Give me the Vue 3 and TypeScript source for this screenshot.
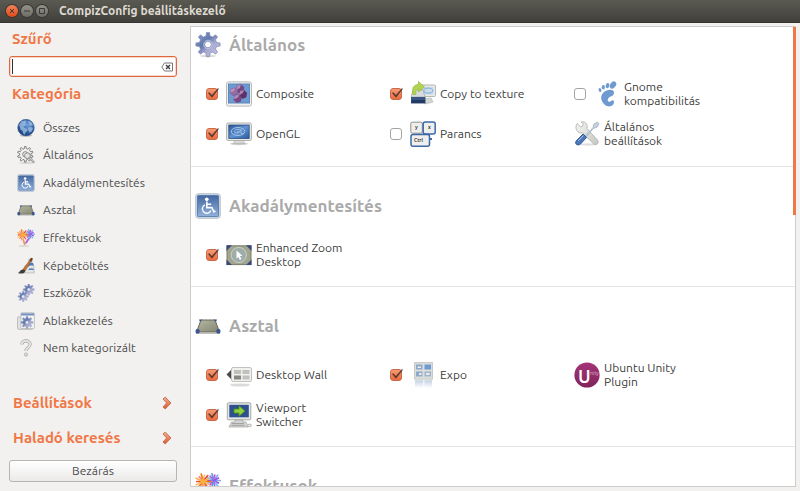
<script setup lang="ts">
import { ref } from 'vue'

interface Category { label: string; icon: string }
interface Plugin { label: string; icon: string; checked?: boolean }
interface Section { title: string; icon: string; plugins: Plugin[] }
interface IconText { x: number; y: number; text: string; kind: string }

const filter = ref('')

const categories: Category[] = [
  { label: 'Összes', icon: 'globe' },
  { label: 'Általános', icon: 'outline-gear' },
  { label: 'Akadálymentesítés', icon: 'access' },
  { label: 'Asztal', icon: 'desk' },
  { label: 'Effektusok', icon: 'burst' },
  { label: 'Képbetöltés', icon: 'image-load' },
  { label: 'Eszközök', icon: 'gears' },
  { label: 'Ablakkezelés', icon: 'window' },
  { label: 'Nem kategorizált', icon: 'question' },
]

const sections = ref<Section[]>([
  {
    title: 'Általános',
    icon: 'gear',
    plugins: [
      { label: 'Composite', icon: 'composite', checked: true },
      { label: 'Copy to texture', icon: 'copy', checked: true },
      { label: 'Gnome\nkompatibilitás', icon: 'foot', checked: false },
      { label: 'OpenGL', icon: 'opengl', checked: true },
      { label: 'Parancs', icon: 'keys', checked: false },
      { label: 'Általános\nbeállítások', icon: 'tools' },
    ],
  },
  {
    title: 'Akadálymentesítés',
    icon: 'access',
    plugins: [{ label: 'Enhanced Zoom\nDesktop', icon: 'zoom', checked: true }],
  },
  {
    title: 'Asztal',
    icon: 'desk',
    plugins: [
      { label: 'Desktop Wall', icon: 'wall', checked: true },
      { label: 'Expo', icon: 'expo', checked: true },
      { label: 'Ubuntu Unity\nPlugin', icon: 'unity' },
      { label: 'Viewport\nSwitcher', icon: 'viewport', checked: true },
    ],
  },
  { title: 'Effektusok', icon: 'burst', plugins: [] },
])

// Lettering that lies on top of an icon, in the icon's 26-unit box.
const iconTexts: Record<string, IconText[]> = {
  keys: [
    { x: 5, y: 8, text: 'y', kind: 'key-text' },
    { x: 18, y: 8, text: 'x', kind: 'key-text' },
    { x: 4, y: 21, text: 'Ctrl', kind: 'key-text' },
  ],
  unity: [
    { x: 4, y: 21, text: 'U', kind: 'unity-large' },
    { x: 16, y: 13, text: 'nity', kind: 'unity-small' },
  ],
}

// Closed outline of a cog with a round hole, drawn with the even-odd rule.
function gearPath(cx: number, cy: number, outer: number, inner: number, hole: number, teeth = 8): string {
  const step = (Math.PI * 2) / teeth
  const at = (r: number, a: number) => `${(cx + r * Math.sin(a)).toFixed(2)} ${(cy - r * Math.cos(a)).toFixed(2)}`
  const points: string[] = []
  for (let i = 0; i < teeth; i++) {
    const a = i * step
    points.push(at(inner, a - step * 0.29), at(outer, a - step * 0.16), at(outer, a + step * 0.16), at(inner, a + step * 0.29))
  }
  return `M${points.join('L')}ZM${cx - hole} ${cy}a${hole} ${hole} 0 1 0 ${hole * 2} 0a${hole} ${hole} 0 1 0 ${-hole * 2} 0Z`
}

interface Ray { d: string; color: string }
function rays(cx: number, cy: number, radius: number, colors: string[], count: number): Ray[] {
  return Array.from({ length: count }, (_, i) => {
    const a = (i * Math.PI * 2) / count
    const r = radius * (i % 2 ? 0.82 : 1)
    const x = (cx + r * Math.cos(a)).toFixed(2)
    const y = (cy + r * Math.sin(a)).toFixed(2)
    return { d: `M${cx} ${cy}L${x} ${y}`, color: colors[i % colors.length] }
  })
}
const coolRays = rays(18.5, 7.5, 6.8, ['#7fa8ee', '#9a4be6', '#6fc3f2', '#b565ec', '#4fa0dc', '#d04ad8'], 14)
const warmRays = rays(8, 8.5, 7.6, ['#f57900', '#fbc06a', '#ef4b3a', '#fbb04c', '#f58aa0'], 14)
</script>

<template>
  <div class="window">
    <svg class="sprite" aria-hidden="true">
      <defs>
        <linearGradient id="g-gear" x1="0" y1="0" x2="1" y2="1">
          <stop offset="0" stop-color="#8fa3cf" /><stop offset=".4" stop-color="#6178ad" /><stop offset=".6" stop-color="#a9a9d2" /><stop offset="1" stop-color="#c9c7e6" />
        </linearGradient>
        <linearGradient id="g-blue" x1="0" y1="0" x2="0" y2="1">
          <stop offset="0" stop-color="#4467a0" /><stop offset="1" stop-color="#91b2dc" />
        </linearGradient>
        <linearGradient id="g-screen" x1="0" y1="0" x2="1" y2="1">
          <stop offset="0" stop-color="#2d5596" /><stop offset=".5" stop-color="#5f92cf" /><stop offset="1" stop-color="#2c5aa2" />
        </linearGradient>
        <radialGradient id="g-globe" cx=".6" cy=".35" r=".7">
          <stop offset="0" stop-color="#6f9fdd" /><stop offset=".55" stop-color="#3465a4" /><stop offset="1" stop-color="#173a70" />
        </radialGradient>
        <linearGradient id="g-desk" x1="0" y1="0" x2="1" y2="1">
          <stop offset="0" stop-color="#b6b8a4" /><stop offset="1" stop-color="#83866f" />
        </linearGradient>
        <linearGradient id="g-metal" x1="0" y1="0" x2="1" y2="1">
          <stop offset="0" stop-color="#f6f6f4" /><stop offset="1" stop-color="#c4c6c1" />
        </linearGradient>
        <linearGradient id="g-fade" x1="0" y1="0" x2="0" y2="1">
          <stop offset="0" stop-color="#a9bdd4" /><stop offset="1" stop-color="#ffffff" />
        </linearGradient>
        <linearGradient id="g-unity" x1="0" y1="0" x2="0" y2="1">
          <stop offset="0" stop-color="#a43478" /><stop offset="1" stop-color="#80245a" />
        </linearGradient>
        <linearGradient id="g-arrow" x1="0" y1="0" x2="0" y2="1">
          <stop offset="0" stop-color="#f0b08c" /><stop offset="1" stop-color="#e0582c" />
        </linearGradient>
      </defs>

      <symbol id="i-gear" viewBox="0 0 26 26">
        <ellipse cx="13" cy="24" rx="8" ry="1.5" fill="#000" opacity=".14" />
        <path :d="gearPath(13, 12.5, 12.2, 8.8, 3.3)" fill="url(#g-gear)" fill-rule="evenodd" stroke="#8791b8" stroke-width=".8" stroke-linejoin="round" />
        <circle cx="13" cy="12.5" r="4.3" fill="none" stroke="#bdc4df" stroke-width="1" />
      </symbol>
      <symbol id="i-outline-gear" viewBox="0 0 26 26">
        <ellipse cx="14" cy="24.5" rx="11" ry="1" fill="#000" opacity=".15" />
        <path :d="gearPath(12, 12, 11.3, 8.2, 3.8, 10)" fill="#f0f0ee" fill-rule="evenodd" stroke="#7d7f7b" stroke-width="1.4" stroke-linejoin="round" />
        <circle cx="15" cy="14" r="4.2" fill="#e2e3e0" stroke="#8a8b87" stroke-width="1.4" />
        <path d="M18 17l6 6" stroke="#8a8b87" stroke-width="3" stroke-linecap="round" />
        <path d="M18 17l6 6" stroke="#f2f2f0" stroke-width="1.2" stroke-linecap="round" />
      </symbol>
      <symbol id="i-globe" viewBox="0 0 26 26">
        <ellipse cx="13" cy="24" rx="9" ry="1.6" fill="#000" opacity=".2" />
        <circle cx="13" cy="12.5" r="12" fill="url(#g-globe)" stroke="#2b548f" stroke-width=".7" />
        <path d="M3 8l4-5 5-1 2 2-2 2 2 1-3 3-2 1 2 2 3 1 1 3-3 3-1 3-2-2-1-4-3-2-1-3zM16 3l4 1 3 4-3 2-3-2 1-2-2-1zM17 12l5 0 1 2-2 4-3 2-1-3-2-2z" fill="#a9c6ea" opacity=".7" />
      </symbol>
      <symbol id="i-access" viewBox="0 0 26 26">
        <rect x=".8" y=".8" width="24.4" height="24.4" rx="2.5" fill="#e7edf5" stroke="#aeb8c6" stroke-width="1" />
        <rect x="2.4" y="2.4" width="21.2" height="21.2" rx="1" fill="url(#g-blue)" stroke="#44689e" stroke-width=".8" />
        <g transform="translate(2.400 2.200) scale(.83)">
          <circle cx="11.3" cy="5" r="2.2" fill="#fff" />
          <path d="M11.4 7.500v7.500h6l2.5 5 1.800-1M11.6 11h5" fill="none" stroke="#fff" stroke-width="1.900" />
          <path d="M9.200 11.6a5.300 5.300 0 1 0 7 6.800" fill="none" stroke="#fff" stroke-width="1.700" />
        </g>
      </symbol>
      <symbol id="i-desk" viewBox="0 0 26 26">
        <path d="M1 20h24v1H1z" fill="#000" opacity=".25" />
        <path d="M6 7h14l4.5 12H1.500z" fill="url(#g-desk)" stroke="#64685a" stroke-width="1" />
        <path d="M4 6.500h3.500L5 9zM22 6.500h-3.500L21 9z" fill="#3e5690" />
        <rect x=".6" y="16" width="4" height="4.500" rx="1.500" fill="#3b5590" />
        <rect x="21.400" y="16" width="4" height="4.500" rx="1.500" fill="#3b5590" />
      </symbol>
      <symbol id="i-burst" viewBox="0 0 26 26">
        <ellipse cx="10" cy="24.500" rx="8" ry="1.200" fill="#000" opacity=".13" />
        <path d="M9 15l2 7" stroke="#ef9a4a" stroke-width="2.500" stroke-linecap="round" />
        <path d="M17 14l-4 6" stroke="#a95ae6" stroke-width="2.500" stroke-linecap="round" />
        <g stroke-linecap="round" stroke-width="1.700">
          <path v-for="(ray, i) in coolRays" :key="'c' + i" :d="ray.d" :stroke="ray.color" />
          <path v-for="(ray, i) in warmRays" :key="'w' + i" :d="ray.d" :stroke="ray.color" />
        </g>
        <circle cx="8" cy="8.500" r="2.500" fill="#fbb03b" />
      </symbol>
      <symbol id="i-image-load" viewBox="0 0 26 26">
        <path d="M9 21l2-8 9-5 4 3 1 12H9z" fill="#e6e7e5" stroke="#a3a5a2" stroke-width=".8" />
        <path d="M16 2.500l6-1 1 8-7 2z" fill="#cfd6df" />
        <path d="M15.500 9.500c3-2 6-2 8-.5l.5 4c-3-1-5-1-8 1zM17 17c2-1 5-1 7 0v2c-2-1-5-1-7 0z" fill="#4a7dc0" />
        <path d="M8 19L20 2l2 1.500L12 20z" fill="#c77430" stroke="#82502a" stroke-width=".7" />
        <path d="M18 5l2.500-4L23 2l-2 5z" fill="#6a4528" />
        <path d="M1 23c3 0 3-5 8-5 2 0 4 2 2 4-2 3-7 2-10 1z" fill="#3c3d3c" />
      </symbol>
      <symbol id="i-gears" viewBox="0 0 26 26">
        <path :d="gearPath(17, 8, 8, 5.6, 2.2)" fill="url(#g-gear)" fill-rule="evenodd" stroke="#8b98bf" stroke-width=".7" />
        <path :d="gearPath(9, 18, 7.6, 5.2, 2.2)" fill="url(#g-gear)" fill-rule="evenodd" stroke="#9aa5c8" stroke-width=".7" />
      </symbol>
      <symbol id="i-window" viewBox="0 0 26 26">
        <rect x=".8" y="7" width="22" height="18" rx="1.500" fill="#e3e4e2" stroke="#a9aba8" />
        <rect x="5.500" y="1" width="19.700" height="23" rx="1.500" fill="#f3f3f2" stroke="#b0b2af" />
        <path d="M6 2h18.700v3H6z" fill="#6f8fc2" />
        <path :d="gearPath(14.5, 15, 8.6, 6, 2.3)" fill="url(#g-gear)" fill-rule="evenodd" stroke="#8390b8" stroke-width=".8" />
      </symbol>
      <symbol id="i-question" viewBox="0 0 26 26">
        <path d="M7 8c0-7 12-7 12-.5 0 4.500-6 5-6 10" fill="none" stroke="#a2a4a0" stroke-width="4.500" />
        <path d="M7 8c0-7 12-7 12-.5 0 4.500-6 5-6 10" fill="none" stroke="#e7e8e6" stroke-width="2.600" />
        <circle cx="13" cy="22.500" r="2.400" fill="#dcdddb" stroke="#a2a4a0" />
      </symbol>
      <symbol id="i-composite" viewBox="0 0 26 26">
        <rect x=".5" y=".9" width="25" height="24.200" rx="2" fill="#f0f0ee" stroke="#b8bab5" />
        <rect x="2.500" y="3" width="21" height="19" fill="#6d9bd1" stroke="#5b86bd" />
        <g stroke="#6d3f78" stroke-width=".5">
          <path d="M11 4.500l4-1 3 3-1 4.500-4 1-3-3z" fill="#76447f" /><path d="M5 8l4-1 3 2.500-1 4-4 1-3-3z" fill="#9a6ba3" />
          <path d="M14 10l4-1 3 3-1 4.500-4 1-3-3z" fill="#5c2f68" /><path d="M9 14.500l4-1 2.500 3-1 4-4 1-3-3z" fill="#7a4685" />
        </g>
        <path d="M11 4.500l4-1-1 3.500-4 2zM5 8l4-1-1 3-4 1.500zM14 10l4-1-1 3-4 2.500zM9 14.500l4-1-1 3-4.500 2z" fill="#c7a2cb" opacity=".75" />
      </symbol>
      <symbol id="i-copy" viewBox="0 0 26 26">
        <rect x="11" y="4" width="14.500" height="11.500" rx="1" fill="#e8e9e7" stroke="#b4b7b2" />
        <rect x="13" y="6" width="10.500" height="7.500" fill="#c9dcee" />
        <ellipse cx="18.300" cy="9.600" rx="4.500" ry="2.500" fill="none" stroke="#7aa5d2" stroke-width=".9" />
        <path d="M3 9h10l2 7H1z" fill="#d9dcde" stroke="#a9acab" stroke-width=".8" />
        <path d="M14 18l7-1 2 4-8 2z" fill="#d5d7d4" stroke="#b4b7b2" stroke-width=".7" />
        <path d="M1 16h14.500v6.500H1z" fill="#3a5687" /><path d="M1.500 19h13.500v3H1.500z" fill="#233a63" />
        <path d="M3 13.500C1.500 7 4 3.500 8.500 3.500V.5l6 5.500-6 5V8C6 8 5.500 10 6 13.500z" fill="#b2d450" stroke="#93b83a" stroke-width=".7" />
      </symbol>
      <symbol id="i-foot" viewBox="0 0 26 26">
        <g fill="#6f9ad0">
          <ellipse cx="19" cy="4" rx="2.800" ry="3.900" transform="rotate(35 19 4)" /><ellipse cx="13.500" cy="4.600" rx="1.800" ry="2.700" transform="rotate(14 13.500 4.600)" />
          <ellipse cx="9.300" cy="6.300" rx="1.600" ry="2.300" /><ellipse cx="6" cy="9" rx="1.400" ry="2" transform="rotate(-14 6 9)" />
          <path d="M20 11.500c0-4-7-3.500-10.500 0-4 4-2.500 9 1.500 12.500 4 3 9 1 9-3 0-2-2-2-3-1-2 2-4 0-3-2 1-3 6-2 6-6.500z" />
        </g>
      </symbol>
      <symbol id="i-opengl" viewBox="0 0 26 26">
        <ellipse cx="13" cy="22.800" rx="9" ry="1.400" fill="#000" opacity=".2" />
        <path d="M9 19h8l1.500 3.500h-11z" fill="#d9dad8" stroke="#aaaca9" stroke-width=".6" />
        <rect x=".6" y="2" width="24.800" height="17.500" rx="1.500" fill="#ebecea" stroke="#afb1ad" />
        <rect x="2.800" y="4" width="20.400" height="13.500" fill="url(#g-screen)" stroke="#2a4d85" stroke-width=".8" />
        <ellipse cx="12" cy="10.500" rx="6.800" ry="4" fill="none" stroke="#a3c3e6" stroke-width="1" />
        <path d="M15 9.200c-5-2-7 0-6.500 1.600.5 1.400 4 1.400 5 0h-2.500M15 8.500v4h3" fill="none" stroke="#a9c8e9" stroke-width=".8" />
      </symbol>
      <symbol id="i-keys" viewBox="0 0 26 26">
        <path d="M19 13v5h3" fill="none" stroke="#3d69a8" stroke-width="2" />
        <rect x=".8" y="1.200" width="11.500" height="11" rx="1.500" fill="#efefed" stroke="#8c8e8a" />
        <rect x="13.200" y=".9" width="12" height="12" rx="2" fill="#efefed" stroke="#3d69a8" stroke-width="1.500" />
        <rect x="1" y="13.500" width="18.500" height="11.700" rx="2" fill="#efefed" stroke="#3d69a8" stroke-width="1.500" />
      </symbol>
      <symbol id="i-tools" viewBox="0 0 26 26">
        <ellipse cx="14" cy="23.500" rx="9" ry="1.200" fill="#000" opacity=".13" />
        <path d="M3 2.500l3.500 3.300 2.200-.6.500-2.600L7 1c4-1 7 2 6 6.500L23.500 19c2 3-1 6-3.800 4L8.500 12C4 13 0 8 3 2.500z" fill="url(#g-metal)" stroke="#b4b6b2" stroke-width=".9" />
        <path d="M10.500 15.500L19 6.500l1-3.500 3.500-2L25 2.800l-2 3.500-3.500 1-7.500 9z" fill="#c6d1de" stroke="#a3b2c4" stroke-width=".8" />
        <path d="M3 19l6-6 3.500 3.500-6 6.500c-3 2.500-7-.5-3.500-4z" fill="#4b78b9" stroke="#294f8b" stroke-width=".9" />
        <path d="M4 20l5.500-5.500" stroke="#a8c2e3" stroke-width="1" />
      </symbol>
      <symbol id="i-zoom" viewBox="0 0 26 26">
        <rect x="1" y="3.800" width="24" height="18.800" fill="#a3a68e" stroke="#7a7d69" />
        <path d="M.5 3.300H6L.5 9zM25.500 3.300H20l5.500 5.700zM.5 23H6L.5 17.500zM25.500 23H20l5.500-5.500z" fill="#374b7d" />
        <circle cx="12.800" cy="13" r="7.600" fill="#9eacaa" stroke="#c9d0c8" stroke-width="1" />
        <path d="M10.500 8.500l6 5.200-2.600.4 1.600 3-1.600.9-1.600-3-1.800 1.600z" fill="#fff" />
      </symbol>
      <symbol id="i-wall" viewBox="0 0 26 26">
        <ellipse cx="14" cy="23" rx="10" ry="1.600" fill="#000" opacity=".14" />
        <path d="M5 8v9L.5 12.500z" fill="#4a4b49" />
        <rect x="5.500" y="5.500" width="20" height="14" rx="1.500" fill="#f0f0ee" stroke="#c0c2be" />
        <path d="M8 8h7v4H8zM16.500 8h7v4h-7zM16.500 13.500h7v4h-7z" fill="#bfc1bd" /><path d="M8 13.500h7v4H8z" fill="#858783" />
      </symbol>
      <symbol id="i-expo" viewBox="0 0 26 26">
        <rect x="4.600" y=".6" width="17.800" height="16.500" fill="#dddfdd" stroke="#c3c6c3" />
        <path d="M6 2.500h6.500v5H6zM6 9.500h6.500v5H6z" fill="#8ea9c9" /><path d="M14.500 2.500H21v5h-6.500z" fill="#6f9bd0" /><path d="M14.500 9.500H21v5h-6.500z" fill="#9fb2c7" />
        <path d="M7.500 4.500H11V6H7.500zM9 11h2.500v2H9zM16 11h3.500v2H16z" fill="#e8edf2" />
        <path d="M5 18.200h17V26H5z" fill="url(#g-fade)" opacity=".7" />
        <path d="M13 18h1.500v8H13z" fill="#fff" opacity=".6" />
      </symbol>
      <symbol id="i-unity" viewBox="0 0 26 26">
        <circle cx="13" cy="13" r="12.600" fill="url(#g-unity)" />
      </symbol>
      <symbol id="i-viewport" viewBox="0 0 26 26">
        <rect x="1.300" y=".8" width="23.500" height="17" rx="1" fill="#e6e7e5" stroke="#a6a8a4" />
        <rect x="3.300" y="2.800" width="19.500" height="12.500" fill="#2c5090" />
        <path d="M8 7h5V3.800l6 5.200-6 5.200V11H8z" fill="#8ed13c" stroke="#4c9111" stroke-width=".8" />
        <path d="M9 18h8v2h3l2 5H3l2.500-5H9z" fill="#d3d4d2" stroke="#a1a39f" stroke-width=".7" /><path d="M6 21.500h12M5.500 23.300h13" stroke="#969894" stroke-width=".8" />
        <ellipse cx="23.500" cy="23.500" rx="1.900" ry="1.400" fill="#e8e8e6" stroke="#a1a39f" stroke-width=".7" />
      </symbol>
    </svg>

    <header class="titlebar">
      <button class="control close" type="button" aria-label="Close">
        <svg viewBox="0 0 12 12"><path d="M4 4l4 4M8 4l-4 4" /></svg>
      </button>
      <button class="control" type="button" aria-label="Minimize">
        <svg viewBox="0 0 12 12"><path d="M3 6h6" /></svg>
      </button>
      <button class="control" type="button" aria-label="Maximize">
        <svg viewBox="0 0 12 12"><path d="M3.500 3.500h5v5h-5z" /></svg>
      </button>
      <h1>CompizConfig beállításkezelő</h1>
    </header>

    <div class="content">
      <aside class="sidebar">
        <label class="side-title" for="filter">Szűrő</label>
        <div class="search">
          <input id="filter" v-model="filter" type="text" autofocus />
          <button type="button" class="clear" aria-label="Clear" @click="filter = ''">
            <svg viewBox="0 0 12 10"><path d="M3.500 1h8v8h-8L.8 5z" /><path class="cross" d="M5 3l4 4M9 3L5 7" /></svg>
          </button>
        </div>
        <h2 class="side-title category-title">Kategória</h2>
        <ul class="categories">
          <li v-for="category in categories" :key="category.label">
            <a href="#">
              <svg class="small-icon"><use :href="'#i-' + category.icon" /></svg>
              {{ category.label }}
            </a>
          </li>
        </ul>
        <nav class="links">
          <a v-for="name in ['Beállítások', 'Haladó keresés']" :key="name" href="#" class="side-title">
            {{ name }}
            <svg class="chevron" viewBox="0 0 10 14"><path d="M1 3L3.200 1 9 7l-5.800 6L1 11l3.600-4z" /></svg>
          </a>
        </nav>
        <button type="button" class="close-button">Bezárás</button>
      </aside>

      <main class="panel">
        <div class="scroll">
          <section v-for="section in sections" :key="section.title">
            <h2><svg class="icon"><use :href="'#i-' + section.icon" /></svg>{{ section.title }}</h2>
            <ul v-if="section.plugins.length" class="plugins">
              <li v-for="plugin in section.plugins" :key="plugin.label">
                <input v-if="plugin.checked !== undefined" v-model="plugin.checked" type="checkbox" :aria-label="plugin.label" />
                <a href="#">
                  <svg class="icon" viewBox="0 0 26 26">
                    <use :href="'#i-' + plugin.icon" />
                    <text v-for="t in iconTexts[plugin.icon]" :key="t.text" :x="t.x" :y="t.y" :class="t.kind">{{ t.text }}</text>
                  </svg>
                  <span>{{ plugin.label }}</span>
                </a>
              </li>
            </ul>
          </section>
        </div>
        <div class="thumb"></div>
      </main>
    </div>
  </div>
</template>

<style>
body {
  background: #f2f1f0;
}
</style>

<style scoped>
.window {
  display: flex;
  flex-direction: column;
  height: 100vh;
  overflow: hidden;
  box-sizing: border-box;
  background: #f2f1f0;
  color: #3c3c3c;
  font: 12px/14px Ubuntu, 'Noto Sans', sans-serif;
}
h1, h2, ul {
  margin: 0;
  padding: 0;
  list-style: none;
}
a {
  color: inherit;
  text-decoration: none;
}
button, input {
  font: inherit;
  color: inherit;
}
svg {
  display: block;
  flex: none;
}
.sprite {
  position: absolute;
  width: 0;
  height: 0;
}
.titlebar {
  display: flex;
  align-items: center;
  gap: 3px;
  flex: none;
  height: 23px;
  padding: 0 6px;
  box-sizing: border-box;
  border-bottom: 1px solid #35342f;
  background: linear-gradient(#5b5a52, #403f3a);
}
.titlebar h1 {
  margin-left: 8px;
  color: #dfdbd2;
  font-size: 12px;
  font-weight: 700;
}
.control {
  width: 12px;
  height: 12px;
  padding: 0;
  border: 0;
  border-radius: 50%;
  background: linear-gradient(#95938a, #6c6b64);
  box-shadow: 0 0 0 1px #383732;
}
.control.close {
  background: linear-gradient(#f5835a, #dd4817);
}
.control svg {
  fill: none;
  stroke: #3a3934;
}
.content {
  display: flex;
  flex: 1;
  min-height: 0;
}
.sidebar {
  display: flex;
  flex-direction: column;
  flex: none;
  width: 190px;
  padding: 7px 13px 9px 9px;
  box-sizing: border-box;
}
.side-title {
  padding: 0 3px;
  color: #f07746;
  font-size: 15px;
  font-weight: 700;
  line-height: 18px;
}
.search {
  display: flex;
  align-items: center;
  height: 21px;
  margin-top: 8px;
  padding: 0 3px 0 2px;
  box-sizing: border-box;
  border: 1px solid #e0683f;
  border-radius: 3px;
  background: #fff;
  box-shadow: inset 0 0 0 1px #f9d8cc;
}
.search input {
  flex: 1;
  min-width: 0;
  height: 15px;
  padding: 0;
  border: 0;
  border-left: 1px solid #333;
  outline: 0;
  background: transparent;
  caret-color: transparent;
}
.clear {
  width: 12px;
  height: 10px;
  padding: 0;
  border: 0;
  background: none;
}
.clear svg {
  fill: #fff;
  stroke: #777;
}
.clear .cross {
  stroke: #444;
  stroke-width: 1.5;
}
.category-title {
  margin-top: 8px;
}
.categories {
  display: grid;
  height: 248px;
  margin-top: 11px;
}
.categories li, .categories a {
  display: flex;
  align-items: center;
}
.categories a {
  gap: 8px;
  padding-left: 8px;
  color: #4c4c4c;
}
.small-icon {
  width: 18px;
  height: 18px;
}
.icon {
  width: 26px;
  height: 26px;
}
.links {
  display: grid;
  gap: 17px;
  margin-top: auto;
  padding: 0 2px 0 1px;
}
.links a {
  display: flex;
  align-items: center;
  justify-content: space-between;
}
.chevron {
  width: 10px;
  height: 14px;
  fill: url(#g-arrow);
  stroke: #c2664a;
  stroke-width: 0.8;
}
.close-button {
  height: 22px;
  margin-top: 13px;
  padding: 0;
  border: 1px solid #b7b5b2;
  border-radius: 3px;
  background: linear-gradient(#fff, #ebeae9);
  color: #4c4c4c;
}
.panel {
  position: relative;
  flex: 1;
  min-width: 0;
  margin: 3px 4px 4px 0;
  border: 1px solid #cfcdcb;
  background: #fff;
}
.scroll {
  height: 100%;
  overflow-y: auto;
  scrollbar-width: none;
}
.thumb {
  position: absolute;
  top: 0;
  right: -1px;
  width: 3px;
  height: 41%;
  background: #f07746;
}
section {
  padding: 21px 0 11px 4px;
  border-bottom: 1px solid #e4e4e4;
}
section:first-child {
  padding: 0 0 12px 4px;
}
section h2 {
  display: flex;
  align-items: center;
  gap: 8px;
  height: 36px;
  color: #aaa;
  font-size: 17px;
  font-weight: 700;
  line-height: 22px;
}
.plugins {
  display: grid;
  grid-template-columns: repeat(auto-fill, 184px);
  padding: 11px 0 0 11px;
}
.plugins li {
  display: flex;
  align-items: center;
  gap: 8px;
  height: 40px;
}
.plugins a {
  display: flex;
  align-items: center;
  gap: 4px;
}
.plugins span {
  white-space: pre-line;
}
.plugins input {
  position: relative;
  flex: none;
  appearance: none;
  width: 12px;
  height: 12px;
  margin: 0;
  border: 1px solid #a5a3a0;
  border-radius: 3px;
  background: #fff;
}
.plugins input:checked {
  border-color: #c9694a;
  background: linear-gradient(#f79a74, #ec6a3c);
}
.plugins input:checked::after {
  content: '';
  position: absolute;
  top: -1px;
  left: 1px;
  width: 11px;
  height: 10px;
  background: #5a3c30;
  clip-path: polygon(0 50%, 12% 42%, 35% 70%, 90% 2%, 100% 8%, 40% 92%, 32% 92%);
}
.key-text {
  fill: #333;
  font: 600 5px 'Noto Sans', sans-serif;
}
.unity-large {
  fill: #fff;
  font: 600 17px 'Noto Sans', sans-serif;
}
.unity-small {
  fill: #d9a6c4;
  font: 5px 'Noto Sans', sans-serif;
}
</style>
